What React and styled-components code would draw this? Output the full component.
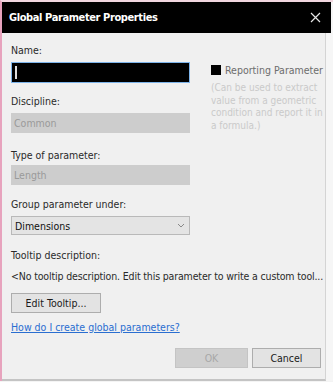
import styled, { createGlobalStyle } from 'styled-components'

const Global = createGlobalStyle`
  html, body { margin: 0; padding: 0; background: #f4f4f4; }
  body { font-family: Tahoma, "DejaVu Sans", "Noto Sans", sans-serif; }
`

const Window = styled.div`
  width: 333px;
  height: 381px;
  box-sizing: border-box;
  border-left: 2px solid #e7a3bd;
  border-top: 2px solid #f1d6df;
  display: flex;
  flex-direction: column;
  background: #f6f6f6;
`

const TitleBar = styled.div`
  height: 31px;
  margin-right: 2px;
  background: #000;
  display: flex;
  align-items: center;
  justify-content: space-between;
  padding: 0 10px 0 7px;
  color: #fff;
  font-family: "DejaVu Sans Condensed", "DejaVu Sans", sans-serif;
  font-size: 11px;
  font-weight: bold;
  letter-spacing: -0.4px;
`

const Close = styled.svg`
  width: 11px;
  height: 11px;
`

const Body = styled.div`
  flex: 1;
  margin-right: 7px;
  border-right: 1px solid #d4d4d4;
  border-bottom: 2px solid #c4c4c4;
  background: #f0f0f0;
  padding: 11px 0 0 9px;
  display: flex;
  flex-direction: column;
  font-family: "DejaVu Sans Condensed", "DejaVu Sans", sans-serif;
  font-size: 10.5px;
  color: #222;
`

const Top = styled.div`
  display: flex;
  gap: 21px;
`

const Left = styled.div`
  width: 179px;
  display: flex;
  flex-direction: column;
`

const Label = styled.div`
  height: 13px;
  line-height: 13px;
  margin-bottom: ${p => p.$gap || 5}px;
  color: #2a2a2a;
`

const NameInput = styled.div`
  height: 21px;
  box-sizing: border-box;
  background: #000;
  border: 1px solid #7eb4ea;
  margin-bottom: 12px;
  display: flex;
  align-items: center;
  padding-left: 3px;
`

const Caret = styled.span`
  width: 2px;
  height: 13px;
  background: #ddd;
`

const Disabled = styled.div`
  height: 20px;
  box-sizing: border-box;
  background: #cdcdcd;
  color: #9a9a9a;
  padding-left: 3px;
  display: flex;
  align-items: center;
  margin-bottom: ${p => p.$gap}px;
`

const Select = styled.div`
  height: 19px;
  box-sizing: border-box;
  background: #e4e4e4;
  border: 1px solid #b9b9b9;
  padding: 0 4px 0 3px;
  display: flex;
  align-items: center;
  justify-content: space-between;
  color: #111;
  margin-bottom: 14px;
`

const Right = styled.div`
  padding-top: 20px;
  width: 112px;
`

const Check = styled.div`
  height: 12px;
  display: flex;
  align-items: center;
  gap: 4px;
  color: #6d6d6d;
  margin-bottom: 6px;
`

const Box = styled.span`
  width: 10px;
  height: 10px;
  background: #000;
`

const Hint = styled.div`
  color: #cacaca;
  line-height: 12.5px;
  font-size: 10px;
`

const Line = styled.div`
  height: 13px;
  line-height: 13px;
  white-space: nowrap;
  color: #2a2a2a;
  margin-bottom: 10px;
  letter-spacing: -0.15px;
`

const Button = styled.div`
  width: ${p => p.$w}px;
  height: 20px;
  box-sizing: border-box;
  background: ${p => (p.$disabled ? '#cfcfcf' : '#e3e3e3')};
  border: 1px solid ${p => (p.$disabled ? '#c4c4c4' : '#adadad')};
  color: ${p => (p.$disabled ? '#a8a8a8' : '#1a1a1a')};
  display: flex;
  align-items: center;
  justify-content: center;
`

const Link = styled.a`
  height: 13px;
  line-height: 13px;
  color: #2a6ed0;
  text-decoration: underline;
  margin-top: 8px;
  align-self: flex-start;
`

const Footer = styled.div`
  display: flex;
  justify-content: flex-end;
  gap: 4px;
  margin-top: 14px;
  padding-right: 4px;
`

export default function App() {
  return (
    <>
      <Global />
      <Window>
        <TitleBar>
          <span>Global Parameter Properties</span>
          <Close viewBox="0 0 11 11">
            <path d="M1 1L10 10M10 1L1 10" stroke="#e6e6e6" strokeWidth="1.2" />
          </Close>
        </TitleBar>
        <Body>
          <Top>
            <Left>
              <Label>Name:</Label>
              <NameInput><Caret /></NameInput>
              <Label>Discipline:</Label>
              <Disabled $gap={16}>Common</Disabled>
              <Label $gap={3}>Type of parameter:</Label>
              <Disabled $gap={13}>Length</Disabled>
              <Label>Group parameter under:</Label>
              <Select>
                <span>Dimensions</span>
                <svg width="8" height="5" viewBox="0 0 8 5">
                  <path d="M1 1L4 4L7 1" stroke="#888" fill="none" />
                </svg>
              </Select>
            </Left>
            <Right>
              <Check><Box />Reporting Parameter</Check>
              <Hint>
                (Can be used to extract value from a geometric condition and report it in a formula.)
              </Hint>
            </Right>
          </Top>
          <Label $gap={8}>Tooltip description:</Label>
          <Line>&lt;No tooltip description. Edit this parameter to write a custom tool...</Line>
          <Button $w={90}>Edit Tooltip...</Button>
          <Link>How do I create global parameters?</Link>
          <Footer>
            <Button $w={73} $disabled>OK</Button>
            <Button $w={69}>Cancel</Button>
          </Footer>
        </Body>
      </Window>
    </>
  )
}
